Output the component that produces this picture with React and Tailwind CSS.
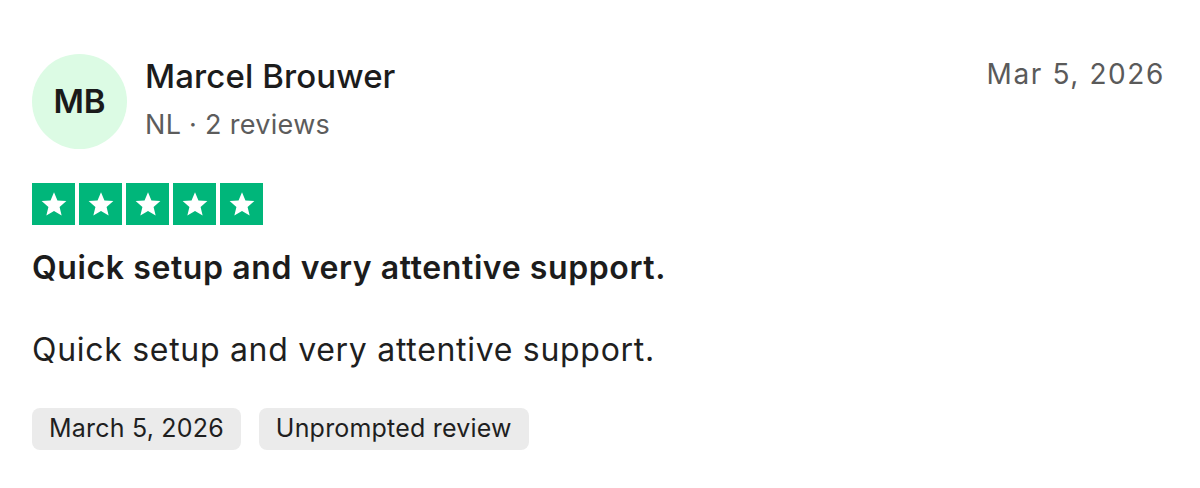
const Star = () => (
  <div className="w-[43px] h-[42px] bg-[#00b67a] flex items-center justify-center">
    <svg viewBox="0 0 24 24" className="w-[30px] h-[30px]" fill="#ffffff">
      <path d="M12 2.5l2.76 6.6 7.14.56-5.44 4.66 1.66 6.96L12 17.5l-6.12 3.78 1.66-6.96L2.1 9.66l7.14-.56z" />
    </svg>
  </div>
);

const Tag = ({ children }) => (
  <span className="inline-flex items-center h-[42px] px-[17px] rounded-[8px] bg-[#ebebeb] text-[25px] tracking-[0.2px] text-[#1f1f1f]">
    {children}
  </span>
);

export default function App() {
  return (
    <div
      className="w-[1200px] h-[488px] bg-white px-[32px] pt-[54px] text-[#1c1c1c]"
      style={{ fontFamily: 'Inter, "Noto Sans", sans-serif' }}
    >
      <div className="flex items-start justify-between">
        <div className="flex items-start gap-[18px]">
          <div className="w-[95px] h-[95px] rounded-full bg-[#dcfbe4] flex items-center justify-center text-[33px] font-semibold text-[#1a1a1a]">
            MB
          </div>
          <div className="flex flex-col gap-[11px] mt-[2px]">
            <div className="text-[33px] font-medium leading-[40px] tracking-[0.1px]">Marcel Brouwer</div>
            <div className="text-[27px] leading-[36px] text-[#5c5c5c] tracking-[0.3px]">NL · 2 reviews</div>
          </div>
        </div>
        <div className="text-[28px] leading-[40px] text-[#5a5a5a] mr-[3px] tracking-[1.6px]">Mar 5, 2026</div>
      </div>

      <div className="flex gap-[4px] mt-[34px]">
        <Star />
        <Star />
        <Star />
        <Star />
        <Star />
      </div>

      <h2 className="mt-[23px] text-[32px] leading-[40px] font-semibold tracking-[0.6px]">
        Quick setup and very attentive support.
      </h2>
      <p className="mt-[42px] text-[32px] leading-[40px] text-[#1f1f1f] tracking-[0.7px]">
        Quick setup and very attentive support.
      </p>

      <div className="flex gap-[18px] mt-[38px]">
        <Tag>March 5, 2026</Tag>
        <Tag>Unprompted review</Tag>
      </div>
    </div>
  );
}
